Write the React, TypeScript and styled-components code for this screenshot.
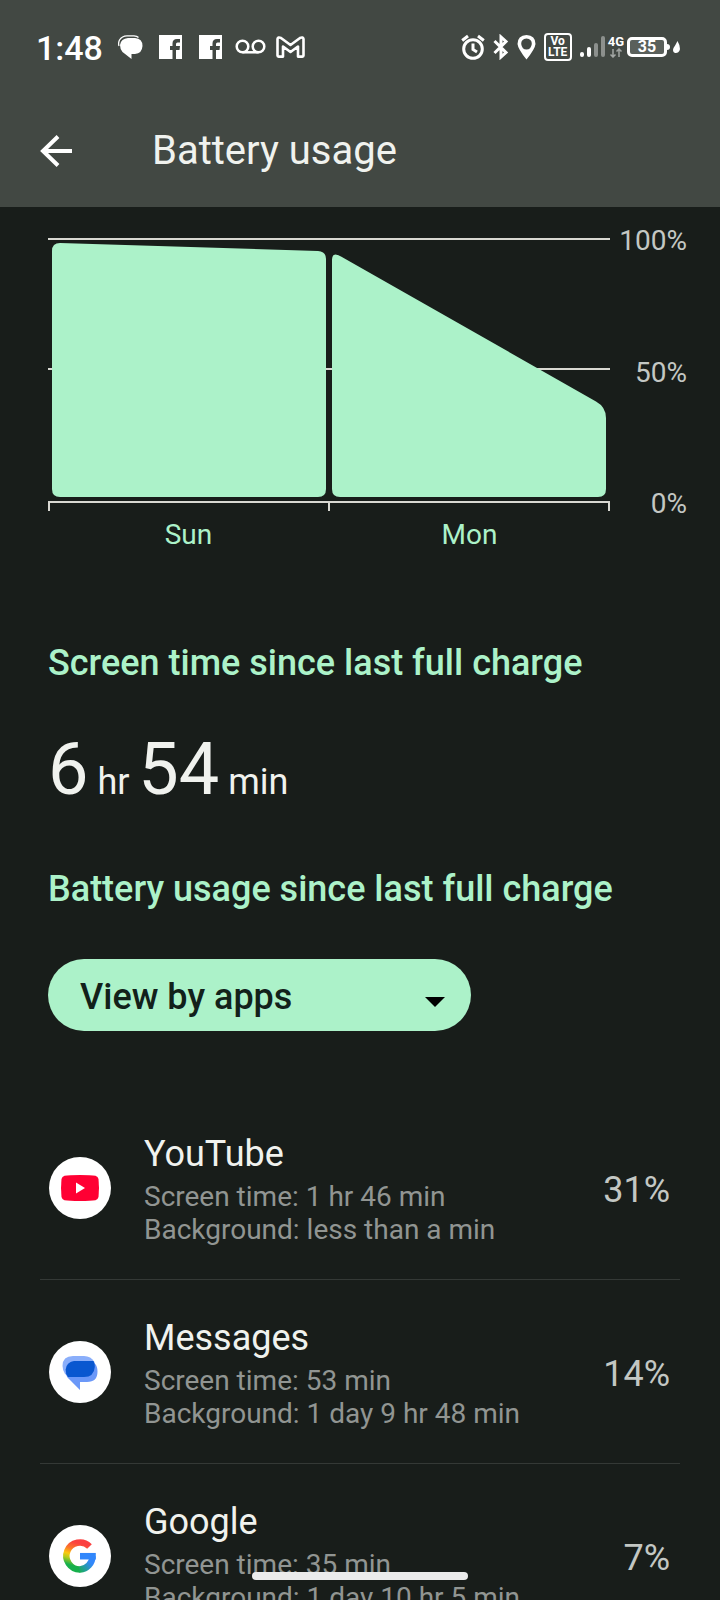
import React from "react";
import styled, { createGlobalStyle } from "styled-components";

const color = {
  bar: "#424843",
  page: "#181d1a",
  mint: "#acf2c9",
  text: "#f0f2ee",
  muted: "#c3c7c3",
  faint: "#919592",
  axis: "#d8d8d2",
  divider: "#343936",
};

const Global = createGlobalStyle`
  * { box-sizing: border-box; }
  body {
    margin: 0;
    background: ${color.page};
    color: ${color.text};
    font-family: Roboto, "Liberation Sans", sans-serif;
  }
`;

const Screen = styled.div`
  display: flex;
  flex-direction: column;
  height: 100vh;
  overflow: hidden;
`;

const TopBar = styled.header`
  flex: none;
  background: ${color.bar};
`;

const StatusBar = styled.div`
  display: flex;
  align-items: center;
  justify-content: space-between;
  height: 94px;
  padding: 0 40px 0 36px;
`;

const StatusGroup = styled.div<{ $gap: number }>`
  display: flex;
  align-items: center;
  gap: ${(p) => p.$gap}px;
`;

const Clock = styled.time`
  padding: 2px 4px 0 0;
  font-size: 34px;
  line-height: 40px;
  font-weight: 500;
  color: #fff;
`;

const Glyph = styled.svg`
  display: block;
  flex: none;
`;

const Notice = styled.span`
  display: grid;
  place-items: center;
  width: 32px;
  height: 32px;
`;

const VoLte = styled.span`
  display: flex;
  flex-direction: column;
  align-items: center;
  justify-content: center;
  width: 28px;
  height: 28px;
  border: 2px solid #fff;
  border-radius: 4px;
  color: #fff;
  font-size: 12px;
  line-height: 11px;
  font-weight: 700;
`;

const Network = styled.span`
  display: flex;
  flex-direction: column;
  align-items: center;
  color: #fff;
  font-size: 13px;
  line-height: 12px;
  font-weight: 700;
`;

const BatteryBody = styled.span`
  display: grid;
  place-items: center;
  width: 40px;
  height: 20px;
  border: 3px solid #fff;
  border-radius: 5px;
  background: #5a605b;
  color: #fff;
  font-size: 16px;
  line-height: 14px;
  font-weight: 700;
`;

const BatteryLevel = styled.span`
  display: flex;
  align-items: center;
`;

const TitleBar = styled.div`
  display: flex;
  align-items: center;
  height: 113px;
  padding: 0 32px;
  gap: 72px;
`;

const BackButton = styled.button`
  display: grid;
  place-items: center;
  width: 48px;
  height: 48px;
  padding: 0;
  border: 0;
  background: none;
`;

const Title = styled.h1`
  margin: 0;
  font-size: 40px;
  line-height: 48px;
  font-weight: 400;
`;

const Content = styled.main`
  flex: 1;
  min-height: 0;
  overflow-y: auto;
  scrollbar-width: none;
`;

const ChartArea = styled.figure`
  display: grid;
  grid-template-columns: 1fr 77px;
  margin: 0;
  padding: 31px 33px 0 48px;
`;

const Plot = styled.svg`
  display: block;
  width: 100%;
`;

const Scale = styled.div`
  display: flex;
  flex-direction: column;
  justify-content: space-between;
  margin: -13px 0 -9px;
  text-align: right;
  color: ${color.muted};
  font-size: 28px;
  line-height: 32px;
`;

const Days = styled.div`
  display: grid;
  grid-template-columns: 1fr 1fr;
  padding-top: 8px;
  text-align: center;
  color: ${color.mint};
  font-size: 28px;
  line-height: 32px;
`;

const Heading = styled.h2`
  margin: 0;
  padding: 0 48px;
  color: ${color.mint};
  font-size: 36px;
  line-height: 44px;
  font-weight: 500;
`;

const ScreenTime = styled.section`
  padding-top: 90px;
`;

const Duration = styled.p`
  margin: 0;
  padding: 43px 48px 0;
  font-size: 36px;
  line-height: 84px;
`;

const Big = styled.span`
  font-size: 72px;
`;

const Usage = styled.section`
  padding-top: 43px;
`;

const Picker = styled.div`
  position: relative;
  width: 60%;
  max-width: 423px;
  margin: 48px 0 0 48px;
`;

const PickerSelect = styled.select`
  appearance: none;
  display: block;
  width: 100%;
  height: 72px;
  padding: 4px 72px 0 32px;
  border: 0;
  border-radius: 36px;
  background: ${color.mint};
  color: #12211a;
  font-family: inherit;
  font-size: 36px;
  line-height: 44px;
  font-weight: 500;
`;

const PickerArrow = styled.svg`
  position: absolute;
  right: 26px;
  top: 38px;
  pointer-events: none;
`;

const AppList = styled.ul`
  margin: 0;
  padding: 65px 40px 0;
  list-style: none;
`;

const AppRow = styled.li`
  display: flex;
  align-items: center;
  gap: 33px;
  height: 184px;
  padding: 0 10px 0 9px;
  border-bottom: 1px solid ${color.divider};
`;

const AppIcon = styled.svg`
  flex: none;
  width: 62px;
  height: 62px;
`;

const AppText = styled.div`
  flex: 1;
  min-width: 0;
  padding-top: 4px;
`;

const AppName = styled.h3`
  margin: 0 0 5px;
  font-size: 36px;
  line-height: 42px;
  font-weight: 400;
`;

const Detail = styled.p`
  margin: 0;
  color: ${color.faint};
  font-size: 28px;
  line-height: 33px;
  white-space: nowrap;
`;

const Percent = styled.span`
  padding-top: 4px;
  color: ${color.muted};
  font-size: 36px;
  line-height: 42px;
`;

const HomeHandle = styled.div`
  position: fixed;
  left: 50%;
  bottom: 20px;
  width: 216px;
  height: 8px;
  border-radius: 4px;
  background: #ebebeb;
  transform: translateX(-50%);
`;

const FacebookGlyph = () => (
  <Glyph width="23" height="24" viewBox="0 0 23 24" fill="#fff" aria-label="Facebook">
    <path d="M0 0H23V24H17V15H20.500L21 11H17V9Q17 7.500 18.500 7.500H21V4H18Q13.500 4 13.500 8.500V11H11V15H13.500V24H0Z" />
  </Glyph>
);

const YouTubeLogo = () => (
  <>
    <path d="M31 18Q42 18 46.500 18.800Q49 19.500 49.500 22Q50.500 31 49.500 40Q49 42.500 46.500 43.200Q42 44 31 44Q20 44 15.500 43.200Q13 42.500 12.500 40Q11.500 31 12.500 22Q13 19.500 15.500 18.800Q20 18 31 18Z" fill="#ff0033" />
    <path d="M27 25.500V36.500L36 31Z" fill="#fff" />
  </>
);

const MessagesLogo = () => (
  <>
    <path d="M24 15H35Q42 15 45.500 21V30L34 36H22L16 33Q13.500 29 13.500 25Q13.500 15 24 15Z" fill="#8aaefa" />
    <path d="M27 20H38Q48.500 20 48.500 30.500Q48.500 41 38 41H31V49L18.500 36.500Q16 33.500 16.500 29.500Q17 20 27 20Z" fill="#6b98f8" />
    <path d="M25 20H44.500Q46 22.500 45.800 26Q45 36 35 36H19Q16.500 33 16.700 28.500Q17.500 21 25 20Z" fill="#0957d0" />
  </>
);

const GoogleLogo = () => (
  <>
    <defs>
      <linearGradient id="ring" gradientUnits="userSpaceOnUse" x1="34" y1="14" x2="24" y2="48">
        <stop offset="0.150" stopColor="#fb4140" />
        <stop offset="0.350" stopColor="#fb7a28" />
        <stop offset="0.500" stopColor="#fcc90f" />
        <stop offset="0.620" stopColor="#b4cb1c" />
        <stop offset="0.800" stopColor="#17b04c" />
      </linearGradient>
      <linearGradient id="tail" gradientUnits="userSpaceOnUse" x1="31" y1="47" x2="42" y2="38">
        <stop offset="0" stopColor="#1aae58" />
        <stop offset="1" stopColor="#3287fb" />
      </linearGradient>
    </defs>
    <g fill="none" strokeWidth="6.500">
      <path d="M40.500 21.500A13.500 13.500 0 1 0 31 44.500" stroke="url(#ring)" />
      <path d="M30.500 44.500H31A13.500 13.500 0 0 0 43.500 31.200" stroke="url(#tail)" />
      <path d="M31 31.200H46.800" stroke="#3287fb" />
    </g>
  </>
);

const apps = [
  { name: "YouTube", screen: "1 hr 46 min", background: "less than a min", percent: 31, Logo: YouTubeLogo },
  { name: "Messages", screen: "53 min", background: "1 day 9 hr 48 min", percent: 14, Logo: MessagesLogo },
  { name: "Google", screen: "35 min", background: "1 day 10 hr 5 min", percent: 7, Logo: GoogleLogo },
];

export default function App() {
  return (
    <Screen>
      <Global />
      <TopBar>
        <StatusBar>
          <StatusGroup $gap={8}>
            <Clock>1:48</Clock>
            <Notice>
              <Glyph width="25" height="24" viewBox="0 0 25 24" fill="#fff" aria-label="Messages">
                <path d="M10 3H17Q24.500 3.500 24.500 11Q24 18.500 17 19H13.500V24L4.500 17Q2 14 2 10Q3 3.500 10 3Z" />
                <path d="M1 11Q0 8 1.500 5Q4 0.800 9 0.800H16Q19 1 20.500 2.500" fill="none" stroke="#fff" strokeWidth="1.300" />
              </Glyph>
            </Notice>
            <Notice>
              <FacebookGlyph />
            </Notice>
            <Notice>
              <FacebookGlyph />
            </Notice>
            <Notice>
              <Glyph width="31" height="16" viewBox="0 0 31 16" fill="none" stroke="#fff" strokeWidth="2.500" aria-label="Voicemail">
                <circle cx="7.500" cy="7.500" r="5.800" />
                <circle cx="23.500" cy="7.500" r="5.800" />
                <path d="M7.500 13.300H23.500" />
              </Glyph>
            </Notice>
            <Notice>
              <Glyph width="29" height="22" viewBox="0 0 29 22" fill="none" stroke="#fff" strokeWidth="2.600" strokeLinejoin="round" aria-label="Gmail">
                <path d="M1.500 3V19.500Q1.500 20.600 2.600 20.600H7V10.500L14.500 16L22 10.500V20.600H26.400Q27.500 20.600 27.500 19.500V3Q27 0.700 24 2L14.500 9L5 2Q2 0.700 1.500 3Z" />
              </Glyph>
            </Notice>
          </StatusGroup>
          <StatusGroup $gap={8}>
            <Glyph width="24" height="26" viewBox="0 0 24 26" fill="none" stroke="#fff" strokeWidth="3" aria-label="Alarm">
              <circle cx="12" cy="15" r="9.300" />
              <path d="M12 9.500V15.500L16 18M1.200 6.500L7 2M22.800 6.500L17 2" />
            </Glyph>
            <Glyph width="16" height="26" viewBox="0 0 16 26" fill="none" stroke="#fff" strokeWidth="3" aria-label="Bluetooth">
              <path d="M1.500 7L13 18.500L8 23V3L13 7.500L1.500 19" />
            </Glyph>
            <Glyph width="19" height="26" viewBox="0 0 19 26" aria-label="Location">
              <path d="M9.500 1Q0.500 1.500 0.500 10Q1 15 9.500 25.500Q18 15 18.500 10Q18.500 1.500 9.500 1ZM9.500 4.500Q15 5 14.800 10Q14 15.500 9.500 15.500Q5 15.500 4.200 10Q4 5 9.500 4.500Z" fill="#fff" fillRule="evenodd" />
            </Glyph>
            <VoLte>
              <span>Vo</span>
              <span>LTE</span>
            </VoLte>
            <StatusGroup $gap={3}>
              <Glyph width="25" height="22" viewBox="0 0 25 22" aria-label="Signal">
                <rect x="0" y="16" width="4" height="5" rx="2" fill="#fff" />
                <rect x="7" y="11" width="4" height="10" rx="2" fill="#fff" />
                <rect x="14" y="7" width="4" height="14" rx="2" fill="#8c908d" />
                <rect x="21" y="0" width="4" height="21" rx="2" fill="#8c908d" />
              </Glyph>
              <Network>
                4G
                <Glyph width="14" height="10" viewBox="0 0 14 10" fill="none" stroke="#a3a7a4" strokeWidth="1.500">
                  <path d="M4 1V9M1.500 6.500L4 9L6.500 6.500M10 9V1M7.500 3.500L10 1L12.500 3.500" />
                </Glyph>
              </Network>
              <BatteryLevel>
                <BatteryBody>35</BatteryBody>
                <Glyph width="13" height="14" viewBox="0 0 13 14" fill="#fff">
                  <path d="M0 4Q3 4 3 7Q3 10 0 10Z" />
                  <path d="M10.500 1Q13.500 6 12.800 10Q11.500 13.500 8 13Q5 12 6.500 8Q8 6 10.500 1Z" />
                </Glyph>
              </BatteryLevel>
            </StatusGroup>
          </StatusGroup>
        </StatusBar>
        <TitleBar>
          <BackButton aria-label="Back">
            <Glyph width="32" height="32" viewBox="0 0 32 32" fill="none" stroke="#fff" strokeWidth="4">
              <path d="M32 16H3M18 1.500L3 16L18 30.500" />
            </Glyph>
          </BackButton>
          <Title>Battery usage</Title>
        </TitleBar>
      </TopBar>

      <Content>
        <ChartArea>
          <Plot viewBox="0 0 562 273" role="img" aria-label="Battery level on Sunday and Monday">
            <g fill={color.axis}>
              <rect x="0" y="0" width="562" height="2" />
              <rect x="0" y="130" width="562" height="2" />
              <rect x="0" y="263" width="562" height="2" />
              <rect x="0" y="263" width="2" height="10" />
              <rect x="280" y="263" width="2" height="10" />
              <rect x="560" y="263" width="2" height="10" />
            </g>
            <g fill={color.mint}>
              <path d="M4 13Q4 5 12 5L270 13Q278 13.500 278 21V251Q278 259 270 259H12Q4 259 4 251Z" />
              <path d="M284 22Q284 13 293 18.500L548 163.500Q558 169 558 180V251Q558 259 550 259H292Q284 259 284 251Z" />
            </g>
          </Plot>
          <Scale>
            <span>100%</span>
            <span>50%</span>
            <span>0%</span>
          </Scale>
          <Days>
            <span>Sun</span>
            <span>Mon</span>
          </Days>
        </ChartArea>

        <ScreenTime>
          <Heading>Screen time since last full charge</Heading>
          <Duration>
            <Big>6</Big> hr <Big>54</Big> min
          </Duration>
        </ScreenTime>

        <Usage>
          <Heading>Battery usage since last full charge</Heading>
          <Picker>
            <PickerSelect aria-label="Usage view" defaultValue="apps">
              <option value="apps">View by apps</option>
              <option value="systems">View by systems</option>
            </PickerSelect>
            <PickerArrow width="20" height="10" viewBox="0 0 20 10">
              <path d="M0 0H20L10 10Z" fill="#000" />
            </PickerArrow>
          </Picker>
          <AppList>
            {apps.map(({ name, screen, background, percent, Logo }) => (
              <AppRow key={name}>
                <AppIcon viewBox="0 0 62 62" aria-hidden="true">
                  <circle cx="31" cy="31" r="31" fill="#fff" />
                  <Logo />
                </AppIcon>
                <AppText>
                  <AppName>{name}</AppName>
                  <Detail>Screen time: {screen}</Detail>
                  <Detail>Background: {background}</Detail>
                </AppText>
                <Percent>{percent}%</Percent>
              </AppRow>
            ))}
          </AppList>
        </Usage>
      </Content>
      <HomeHandle />
    </Screen>
  );
}
